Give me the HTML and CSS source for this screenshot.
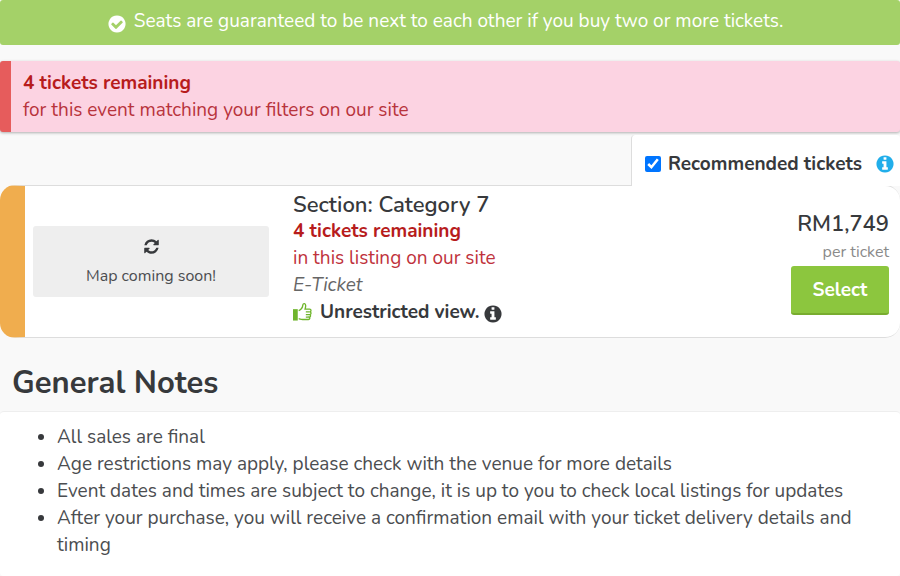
FILE: index.html
```html
<!DOCTYPE html>
<html lang="en">
<head>
    <meta charset="utf-8">
    <title>Tickets</title>
    <link rel="stylesheet" href="styles.css">
</head>
<body>

    <div class="guarantee">
        <svg class="icon" viewBox="0 0 1792 1792"><path d="M1412 734q0-28-18-46l-91-90q-19-19-45-19t-45 19l-408 407-226-226q-19-19-45-19t-45 19l-91 90q-18 18-18 46 0 27 18 45l362 362q19 19 45 19 27 0 46-19l543-543q18-18 18-45zm252 162q0 209-103 385.500t-279.500 279.500-385.500 103-385.500-103-279.500-279.500-103-385.500 103-385.500 279.500-279.500 385.500-103 385.500 103 279.500 279.500 103 385.500z"/></svg>
        <span>Seats are guaranteed to be next to each other if you buy two or more tickets.</span>
    </div>

    <div class="remaining">
        <strong>4 tickets remaining</strong>
        <p>for this event matching your filters on our site</p>
    </div>

    <div class="filter">
        <input type="checkbox" id="recommended" checked>
        <label for="recommended">Recommended tickets</label>
        <svg class="icon info" viewBox="0 0 1792 1792"><path d="M1152 1376v-160q0-14-9-23t-23-9h-96v-512q0-14-9-23t-23-9h-320q-14 0-23 9t-9 23v160q0 14 9 23t23 9h96v320h-96q-14 0-23 9t-9 23v160q0 14 9 23t23 9h448q14 0 23-9t9-23zm-128-896v-160q0-14-9-23t-23-9h-192q-14 0-23 9t-9 23v160q0 14 9 23t23 9h192q14 0 23-9t9-23zm640 416q0 209-103 385.500t-279.500 279.500-385.500 103-385.500-103-279.500-279.500-103-385.500 103-385.500 279.500-279.500 385.500-103 385.500 103 279.500 279.500 103 385.500z"/></svg>
    </div>

    <div class="listing">
        <div class="map">
            <svg class="refresh" viewBox="0 0 1792 1792"><path d="M1639 1056q0 5-1 7-64 268-268 434.500t-478 166.500q-146 0-282.500-55t-243.500-157l-129 129q-19 19-45 19t-45-19-19-45v-448q0-26 19-45t45-19h448q26 0 45 19t19 45-19 45l-137 137q71 66 161 102t187 36q134 0 250-65t186-179q11-17 53-117 8-23 30-23h192q13 0 22.500 9.500t9.500 22.500zm25-800v448q0 26-19 45t-45 19h-448q-26 0-45-19t-19-45 19-45l138-138q-148-137-349-137-134 0-250 65t-186 179q-11 17-53 117-8 23-30 23h-199q-13 0-22.500-9.500t-9.500-22.500v-7q65-268 270-434.500t480-166.500q146 0 284 55.500t245 156.500l130-129q19-19 45-19t45 19 19 45z"/></svg>
            <span>Map coming soon!</span>
        </div>
        <div class="details">
            <h2>Section: Category 7</h2>
            <strong>4 tickets remaining</strong>
            <p class="left">in this listing on our site</p>
            <p class="type">E-Ticket</p>
            <div class="view">
                <svg class="thumb" viewBox="0 0 20 20"><path class="cuff" d="M0 7h5v12H0z"/><path class="hand" d="M6 8.500c2.500-1 4-3 4.300-5.500.2-1.500.8-2 1.700-1.800 1.500.3 1.800 2.300.7 5.800h4.800c1.800 0 2 2.500.2 2.800 1.800.2 1.700 2.700-.2 2.900 1.500.3 1.300 2.500-.4 2.700 1 .6.700 2.500-.8 2.500H10c-1.500 0-2.500-.6-4-.9M13.500 9.800h4M13.500 12.700h4M13.500 15.400h3.500"/></svg>
                <span>Unrestricted view.</span>
                <svg class="icon" viewBox="0 0 1792 1792"><path d="M1152 1376v-160q0-14-9-23t-23-9h-96v-512q0-14-9-23t-23-9h-320q-14 0-23 9t-9 23v160q0 14 9 23t23 9h96v320h-96q-14 0-23 9t-9 23v160q0 14 9 23t23 9h448q14 0 23-9t9-23zm-128-896v-160q0-14-9-23t-23-9h-192q-14 0-23 9t-9 23v160q0 14 9 23t23 9h192q14 0 23-9t9-23zm640 416q0 209-103 385.500t-279.500 279.500-385.500 103-385.500-103-279.500-279.500-103-385.500 103-385.500 279.500-279.500 385.500-103 385.500 103 279.500 279.500 103 385.500z"/></svg>
            </div>
        </div>
        <div class="buy">
            <span class="price">RM1,749</span>
            <span class="per">per ticket</span>
            <button type="button">Select</button>
        </div>
    </div>

    <h1>General Notes</h1>
    <div class="notes">
        <ul>
            <li>All sales are final</li>
            <li>Age restrictions may apply, please check with the venue for more details</li>
            <li>Event dates and times are subject to change, it is up to you to check local listings for updates</li>
            <li>After your purchase, you will receive a confirmation email with your ticket delivery details and timing</li>
        </ul>
    </div>

</body>
</html>
```

FILE: styles.css
```css
* {
    box-sizing: border-box;
}

body {
    font-family: Nunito, Lato, sans-serif;
    font-size: 19px;
    line-height: 27px;
    color: #37393c;
    background-color: #f9f9f9;
    margin: 0;
    display: flex;
    flex-direction: column;
    min-height: 100vh;
}

p, h1, h2 {
    margin: 0;
}

.icon {
    width: 20px;
    height: 20px;
    fill: currentColor;
    flex: none;
}

.guarantee {
    display: flex;
    justify-content: center;
    align-items: center;
    gap: 7px;
    padding: 8px 20px 10px 10px;
    background-color: #a4d168;
    color: white;
    border-radius: 3px;
}

.guarantee .icon {
    margin-top: 5px;
}

.remaining {
    margin-top: 16px;
    padding: 9px 12px 8px;
    border-left: 11px solid #e65c5c;
    border-radius: 3px;
    background-color: #fcd3e2;
    box-shadow: 0 1px 3px rgba(0, 0, 0, 0.3);
    color: #b8343c;
}

strong {
    display: block;
    color: #b71c1c;
}

.filter {
    display: flex;
    align-items: center;
    align-self: flex-end;
    min-width: 269px;
    height: 51px;
    margin: 3px 0 -1px;
    padding: 7px 5px 0 13px;
    background-color: white;
    border-left: 1px solid #ddd;
    border-radius: 4px 4px 0 0;
    font-weight: bold;
    z-index: 1;
}

.filter input {
    width: 16px;
    height: 16px;
    margin: 0 7px 0 0;
    accent-color: #0075ff;
}

.filter .info {
    color: #21aeea;
    margin-left: auto;
}

.listing {
    display: flex;
    align-items: center;
    min-height: 153px;
    padding: 4px 11px 10px 8px;
    background-color: white;
    border: 1px solid #ddd;
    border-left: 25px solid #f0ad4e;
    border-right: 0;
    border-radius: 15px;
}

.map {
    display: flex;
    flex-direction: column;
    align-items: center;
    width: 236px;
    margin-top: 6px;
    padding: 12px 8px 7px;
    gap: 8px;
    background-color: #eee;
    border-radius: 3px;
    font-size: 16px;
    color: #4b4d50;
}

.refresh {
    width: 17px;
    height: 17px;
    fill: #37393c;
}

.details {
    flex: 1;
    margin-left: 24px;
}

h2 {
    font-size: 22px;
    font-weight: 600;
    line-height: 28px;
}

.details strong {
    line-height: 24px;
}

.left {
    color: #c0323c;
    line-height: 30px;
}

.type {
    font-style: italic;
    line-height: 24px;
    color: #666;
}

.view {
    display: flex;
    align-items: center;
    line-height: 30px;
    font-weight: bold;
}

.view .icon {
    margin: 4px 0 0 3px;
}

.thumb {
    width: 19px;
    height: 20px;
    margin-right: 8px;
}

.cuff {
    fill: #6fb52c;
}

.hand {
    fill: none;
    stroke: #6fb52c;
    stroke-width: 1.4;
}

.buy {
    display: flex;
    flex-direction: column;
    align-items: flex-end;
    margin-top: 7px;
}

.price {
    font-size: 22px;
    line-height: 30px;
    font-weight: 600;
}

.per {
    font-size: 16px;
    line-height: 27px;
    color: #8a8a8a;
}

button {
    width: 98px;
    height: 49px;
    border: 0;
    border-bottom: 2px solid #78ac2f;
    border-radius: 3px;
    background-color: #8cc63e;
    color: white;
    font-family: inherit;
    font-size: 19px;
    font-weight: bold;
    cursor: pointer;
}

h1 {
    padding: 25px 12px 8px;
    font-size: 31px;
    line-height: 40px;
}

.notes {
    flex: 1;
    padding: 12px 16px;
    background-color: white;
    border-top: 1px solid #eee;
    border-radius: 4px;
    color: #4b4d50;
}

.notes ul {
    margin: 0;
    padding-left: 41px;
}

li::marker {
    color: #37393c;
}
```
